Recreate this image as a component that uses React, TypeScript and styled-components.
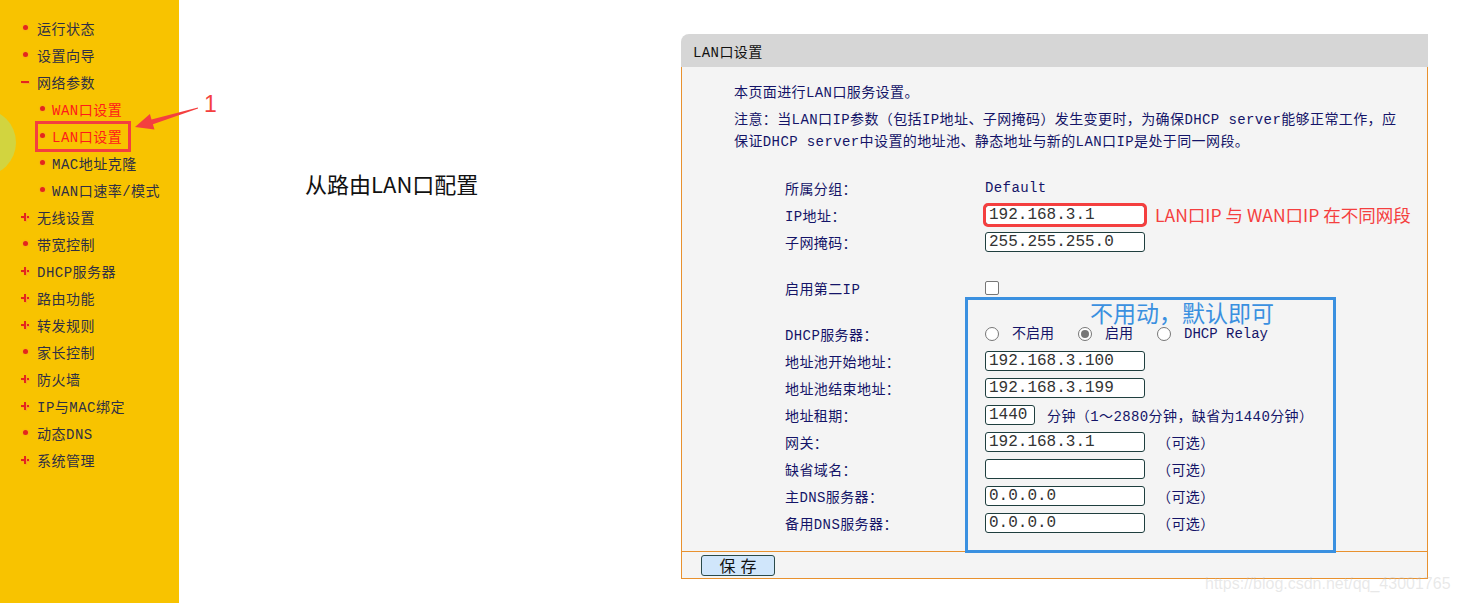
import styled, { createGlobalStyle } from 'styled-components'

const GlobalStyle = createGlobalStyle`
  html, body {
    margin: 0;
    padding: 0;
    background: #ffffff;
  }
  body {
    width: 1458px;
    height: 603px;
    overflow: hidden;
  }
`

const song = `"Liberation Mono", "Noto Sans CJK SC", monospace`
const hei = `"Noto Sans CJK SC", "Noto Sans", sans-serif`

const Page = styled.div`
  position: relative;
  display: flex;
  width: 1458px;
  height: 603px;
  overflow: hidden;
`

/* ---------- sidebar ---------- */

const Sidebar = styled.nav`
  position: relative;
  flex: none;
  width: 179px;
  height: 100%;
  background: #f8c300;
  padding-top: 14px;
  box-sizing: border-box;
  overflow: hidden;
`

const Blob = styled.div`
  position: absolute;
  left: -51px;
  top: 109px;
  width: 67px;
  height: 67px;
  border-radius: 50%;
  background: #d2d43f;
`

const MenuItem = styled.div<{ $sub?: boolean; $active?: boolean; $boxed?: boolean }>`
  position: relative;
  display: flex;
  align-items: center;
  height: 27px;
  padding-left: ${p => (p.$sub ? '36px' : '19px')};
  font-family: ${song};
  font-size: 14px;
  letter-spacing: 0.5px;
  color: ${p => (p.$active ? '#ff1a1a' : '#2f2f45')};

  ${p =>
    p.$boxed &&
    `
    &::after {
      content: '';
      position: absolute;
      left: 35px;
      top: -1px;
      width: 96px;
      height: 31px;
      box-sizing: border-box;
      border: 3px solid #f43f3f;
    }
  `}
`

type Mark = 'dot' | 'plus' | 'minus'

const Marker = styled.span<{ $mark: Mark; $sub?: boolean }>`
  position: relative;
  flex: none;
  width: 12px;
  height: 12px;
  margin-right: ${p => (p.$sub ? '4px' : '6px')};

  &::before,
  &::after {
    content: '';
    position: absolute;
    background: #e4261c;
    box-shadow: 0 0 1px 0.5px #f5a623;
  }

  ${p =>
    p.$mark === 'dot' &&
    `
    &::before { left: 3.5px; top: 3.5px; width: 5px; height: 5px; border-radius: 50%; }
    &::after { display: none; }
  `}

  ${p =>
    p.$mark === 'plus' &&
    `
    &::before { left: 2px; top: 5px; width: 8px; height: 2.5px; }
    &::after { left: 4.75px; top: 2px; width: 2.5px; height: 8px; }
  `}

  ${p =>
    p.$mark === 'minus' &&
    `
    &::before { left: 2px; top: 5px; width: 8px; height: 2px; }
    &::after { display: none; }
  `}
`

const menu: { label: string; mark: Mark; sub?: boolean; active?: boolean; boxed?: boolean }[] = [
  { label: '运行状态', mark: 'dot' },
  { label: '设置向导', mark: 'dot' },
  { label: '网络参数', mark: 'minus' },
  { label: 'WAN口设置', mark: 'dot', sub: true, active: true },
  { label: 'LAN口设置', mark: 'dot', sub: true, active: true, boxed: true },
  { label: 'MAC地址克隆', mark: 'dot', sub: true },
  { label: 'WAN口速率/模式', mark: 'dot', sub: true },
  { label: '无线设置', mark: 'plus' },
  { label: '带宽控制', mark: 'dot' },
  { label: 'DHCP服务器', mark: 'plus' },
  { label: '路由功能', mark: 'plus' },
  { label: '转发规则', mark: 'plus' },
  { label: '家长控制', mark: 'dot' },
  { label: '防火墙', mark: 'plus' },
  { label: 'IP与MAC绑定', mark: 'plus' },
  { label: '动态DNS', mark: 'dot' },
  { label: '系统管理', mark: 'plus' },
]

/* ---------- main ---------- */

const Main = styled.main`
  display: grid;
  grid-template-columns: 376px 747px;
  align-items: start;
  padding-left: 126px;
`

const Caption = styled.h2`
  margin: 168px 0 0;
  font-family: ${hei};
  font-size: 22px;
  font-weight: 400;
  line-height: 30px;
  color: #111111;
`

const Panel = styled.section`
  margin-top: 34px;
  width: 747px;
  font-family: ${song};
  font-size: 14px;
  letter-spacing: 0.4px;
  color: #141468;
`

const PanelHeader = styled.div`
  height: 33px;
  display: flex;
  align-items: center;
  padding-left: 12px;
  background: #d6d6d6;
  border-top-left-radius: 8px;
  color: #111111;
`

const PanelBody = styled.div`
  position: relative;
  padding: 15px 0 15px;
  background: #f4f4f4;
  border-left: 1px solid #e8912e;
  border-right: 1px solid #e8912e;
`

const Intro = styled.p`
  margin: 0 0 5px 52px;
  line-height: 22px;
`

const Note = styled.p`
  margin: 0 0 21px 52px;
  line-height: 22px;
`

const Form = styled.div`
  padding-left: 103px;
`

const FormRow = styled.div`
  display: grid;
  grid-template-columns: 200px auto;
  align-items: center;
  height: 27px;
`

const Spacer = styled.div`
  height: 19px;
`

const Value = styled.div`
  display: flex;
  align-items: center;
`

const TextBox = styled.input<{ $width?: number; $highlight?: boolean }>`
  box-sizing: border-box;
  width: ${p => p.$width ?? 160}px;
  height: 20px;
  margin: 0;
  padding: 0 3px;
  border: 1px solid #1f3f3f;
  border-radius: 3px;
  background: #ffffff;
  font-family: "Liberation Mono", monospace;
  font-size: 16px;
  letter-spacing: 0;
  color: #333333;
  outline: ${p => (p.$highlight ? '3px solid #f43f3f' : 'none')};
  outline-offset: -1px;
`

const Hint = styled.span`
  margin-left: 12px;
`

const CheckBox = styled.input`
  appearance: none;
  box-sizing: border-box;
  width: 14px;
  height: 14px;
  margin: 0;
  border: 1px solid #767676;
  border-radius: 2px;
  background: #ffffff;
`

const Radio = styled.input`
  appearance: none;
  position: relative;
  box-sizing: border-box;
  width: 14px;
  height: 14px;
  margin: 0 13px 0 0;
  border: 1px solid #767676;
  border-radius: 50%;
  background: #ffffff;

  &:checked::after {
    content: '';
    position: absolute;
    left: 2px;
    top: 2px;
    width: 8px;
    height: 8px;
    border-radius: 50%;
    background: #777777;
  }
`

const RadioLabel = styled.span`
  margin-right: 24px;
  line-height: 18px;
  letter-spacing: 0;
`

const PanelFooter = styled.div`
  display: flex;
  align-items: center;
  height: 26px;
  padding-left: 19px;
  background: #f4f4f4;
  border: 1px solid #e8912e;
`

const SaveButton = styled.button`
  width: 74px;
  height: 21px;
  padding: 0 0 0 5px;
  border: 1px solid #2a4a4a;
  border-radius: 3px;
  background: #d0e6fb;
  font-family: ${hei};
  font-size: 16px;
  line-height: 19px;
  letter-spacing: 5px;
  color: #111111;
`

/* ---------- annotations ---------- */

const BlueFrame = styled.div`
  position: absolute;
  left: 283px;
  top: 230px;
  width: 371px;
  height: 256px;
  box-sizing: border-box;
  border: 3px solid #3a90e0;
  pointer-events: none;
`

const BlueNote = styled.div`
  position: absolute;
  left: 122px;
  top: 1px;
  font-family: ${hei};
  font-size: 23px;
  line-height: 22px;
  letter-spacing: 0;
  color: #3a90e0;
  white-space: nowrap;
`

const RedNote = styled.div`
  position: absolute;
  left: 473px;
  top: 136px;
  font-family: ${hei};
  font-size: 17.5px;
  line-height: 24px;
  letter-spacing: 0;
  color: #f43f3f;
  white-space: nowrap;
`

const Arrow = styled.svg`
  position: absolute;
  left: 0;
  top: 0;
  pointer-events: none;
`

const StepNumber = styled.div`
  position: absolute;
  left: 204px;
  top: 90px;
  font-family: "Liberation Sans", sans-serif;
  font-size: 23px;
  line-height: 28px;
  color: #f43f3f;
`

const Watermark = styled.div`
  position: absolute;
  left: 1205px;
  top: 573px;
  font-family: "Liberation Sans", sans-serif;
  font-size: 16px;
  line-height: 22px;
  color: rgba(190, 190, 190, 0.35);
  white-space: nowrap;
`

export default function App() {
  return (
    <Page>
      <GlobalStyle />
      <Sidebar>
        <Blob />
        {menu.map(item => (
          <MenuItem key={item.label} $sub={item.sub} $active={item.active} $boxed={item.boxed}>
            <Marker $mark={item.mark} $sub={item.sub} />
            {item.label}
          </MenuItem>
        ))}
      </Sidebar>

      <Main>
        <Caption>从路由LAN口配置</Caption>

        <Panel>
          <PanelHeader>LAN口设置</PanelHeader>
          <PanelBody>
            <Intro>本页面进行LAN口服务设置。</Intro>
            <Note>
              注意：当LAN口IP参数（包括IP地址、子网掩码）发生变更时，为确保DHCP server能够正常工作，应
              <br />
              保证DHCP server中设置的地址池、静态地址与新的LAN口IP是处于同一网段。
            </Note>

            <Form>
              <FormRow>
                <span>所属分组：</span>
                <Value>Default</Value>
              </FormRow>
              <FormRow>
                <span>IP地址：</span>
                <Value>
                  <TextBox $highlight defaultValue="192.168.3.1" />
                </Value>
              </FormRow>
              <FormRow>
                <span>子网掩码：</span>
                <Value>
                  <TextBox defaultValue="255.255.255.0" />
                </Value>
              </FormRow>
              <Spacer />
              <FormRow>
                <span>启用第二IP</span>
                <Value>
                  <CheckBox type="checkbox" />
                </Value>
              </FormRow>
              <Spacer />
              <FormRow>
                <span>DHCP服务器：</span>
                <Value>
                  <Radio type="radio" name="dhcp" />
                  <RadioLabel>不启用</RadioLabel>
                  <Radio type="radio" name="dhcp" defaultChecked />
                  <RadioLabel>启用</RadioLabel>
                  <Radio type="radio" name="dhcp" />
                  <RadioLabel>DHCP Relay</RadioLabel>
                </Value>
              </FormRow>
              <FormRow>
                <span>地址池开始地址：</span>
                <Value>
                  <TextBox defaultValue="192.168.3.100" />
                </Value>
              </FormRow>
              <FormRow>
                <span>地址池结束地址：</span>
                <Value>
                  <TextBox defaultValue="192.168.3.199" />
                </Value>
              </FormRow>
              <FormRow>
                <span>地址租期：</span>
                <Value>
                  <TextBox $width={50} defaultValue="1440" />
                  <Hint>分钟（1～2880分钟，缺省为1440分钟）</Hint>
                </Value>
              </FormRow>
              <FormRow>
                <span>网关：</span>
                <Value>
                  <TextBox defaultValue="192.168.3.1" />
                  <Hint>（可选）</Hint>
                </Value>
              </FormRow>
              <FormRow>
                <span>缺省域名：</span>
                <Value>
                  <TextBox defaultValue="" />
                  <Hint>（可选）</Hint>
                </Value>
              </FormRow>
              <FormRow>
                <span>主DNS服务器：</span>
                <Value>
                  <TextBox defaultValue="0.0.0.0" />
                  <Hint>（可选）</Hint>
                </Value>
              </FormRow>
              <FormRow>
                <span>备用DNS服务器：</span>
                <Value>
                  <TextBox defaultValue="0.0.0.0" />
                  <Hint>（可选）</Hint>
                </Value>
              </FormRow>
            </Form>

            <RedNote>LAN口IP 与 WAN口IP 在不同网段</RedNote>
            <BlueFrame>
              <BlueNote>不用动，默认即可</BlueNote>
            </BlueFrame>
          </PanelBody>
          <PanelFooter>
            <SaveButton>保存</SaveButton>
          </PanelFooter>
        </Panel>
      </Main>

      <Arrow width="220" height="140" viewBox="0 0 220 140">
        <polygon
          points="135,127 149.9,114.1 151.5,119.4 197.9,107.5 198.1,108.5 152.9,124.2 154.5,129.5"
          fill="#f43f3f"
        />
      </Arrow>
      <StepNumber>1</StepNumber>
      <Watermark>https://blog.csdn.net/qq_43001765</Watermark>
    </Page>
  )
}
